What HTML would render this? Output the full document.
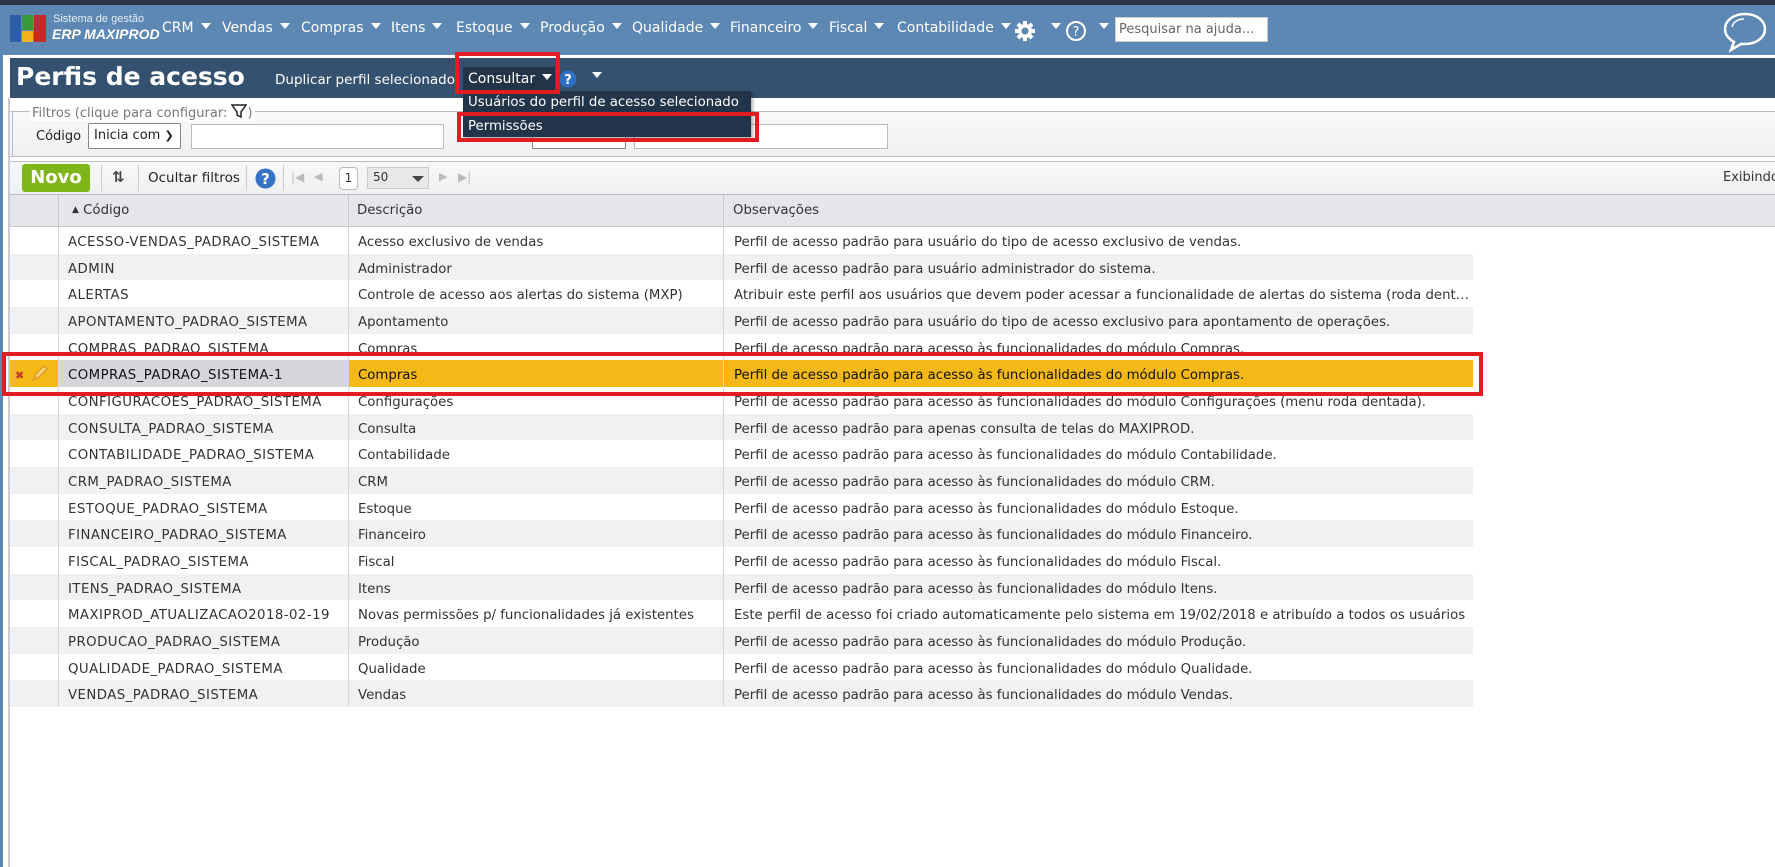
<!DOCTYPE html>
<html><head><meta charset="utf-8">
<style>
*{box-sizing:border-box;margin:0;padding:0}
body{width:1775px;height:867px;overflow:hidden;background:#fff;font-family:"DejaVu Sans","Liberation Sans",sans-serif;font-size:13px;color:#333;position:relative}
.a{position:absolute;white-space:nowrap}
.nav{left:0;top:5px;width:1775px;height:50px;background:#5c88b3}
.nv{color:#fff;font-size:14px;top:20px}
.tri{display:inline-block;width:0;height:0;border-left:5px solid transparent;border-right:5px solid transparent;border-top:6px solid #fff;vertical-align:3px;margin-left:7px}
.row{position:absolute;left:10px;width:1463px;height:26.67px;font-size:13.3px}
.row div{position:absolute;top:0;height:100%;line-height:26.67px;padding-top:3px;overflow:hidden;text-overflow:ellipsis;white-space:nowrap}
.c0{left:0;width:48px}
.c1{left:48px;width:290px;padding-left:9px;border-left:1px solid #d5d7da;letter-spacing:0.45px}
.c2{left:338px;width:375px;padding-left:9px;border-left:1px solid #d5d7da}
.c3{left:713px;width:750px;padding-left:10px;border-left:1px solid #d5d7da}
.g{background:#f0f1f3}
</style></head><body>
<div class="a" style="left:0;top:0;width:1775px;height:5px;background:#2e3647"></div>
<div class="a nav"></div>
<div class="a" style="left:0;top:5px;width:3px;height:862px;background:#5c88b3"></div>
<div class="a" style="left:8px;top:98px;width:2px;height:769px;background:#c9ccd1"></div>
<!-- logo -->
<div class="a" style="left:10px;top:15px;width:11px;height:27px;background:#2d5fa8"></div>
<div class="a" style="left:22px;top:15px;width:11px;height:15px;background:#3a9a3a"></div>
<div class="a" style="left:22px;top:31px;width:11px;height:11px;background:#f2b21c"></div>
<div class="a" style="left:34px;top:15px;width:12px;height:27px;background:#c42a2a"></div>
<div class="a" style="left:53px;top:13px;color:#e6edf5;font-size:11px;font-family:'Liberation Sans',sans-serif">Sistema de gestão</div>
<div class="a" style="left:52px;top:26px;color:#fff;font-size:14px;font-style:italic;font-weight:bold;font-family:'Liberation Sans',sans-serif">ERP MAXIPROD</div>
<div class="a nv" style="left:162px">CRM<span class="tri"></span></div>
<div class="a nv" style="left:222px">Vendas<span class="tri"></span></div>
<div class="a nv" style="left:301px">Compras<span class="tri"></span></div>
<div class="a nv" style="left:391px">Itens<span class="tri"></span></div>
<div class="a nv" style="left:456px">Estoque<span class="tri"></span></div>
<div class="a nv" style="left:540px">Produção<span class="tri"></span></div>
<div class="a nv" style="left:632px">Qualidade<span class="tri"></span></div>
<div class="a nv" style="left:730px">Financeiro<span class="tri"></span></div>
<div class="a nv" style="left:829px">Fiscal<span class="tri"></span></div>
<div class="a nv" style="left:897px">Contabilidade<span class="tri"></span></div>
<svg class="a" style="left:1014px;top:20px" width="22" height="22" viewBox="0 0 22 22"><g fill="#fff"><circle cx="11" cy="11" r="7"/><rect x="9" y="1" width="4" height="20"/><rect x="1" y="9" width="20" height="4"/><rect x="9" y="1" width="4" height="20" transform="rotate(45 11 11)"/><rect x="9" y="1" width="4" height="20" transform="rotate(-45 11 11)"/></g><circle cx="11" cy="11" r="3.5" fill="#5c88b3"/></svg>
<div class="a nv" style="left:1044px"><span class="tri"></span></div>
<svg class="a" style="left:1065px;top:20px" width="22" height="22"><circle cx="11" cy="11" r="9" fill="none" stroke="#fff" stroke-width="2"/><text x="11" y="16" text-anchor="middle" fill="#fff" font-size="13" font-family="DejaVu Sans">?</text></svg>
<div class="a nv" style="left:1092px"><span class="tri"></span></div>
<div class="a" style="left:1115px;top:17px;width:153px;height:25px;background:#fff;border:1px solid #ccc;color:#666;font-size:13px;line-height:23px;padding-left:3px">Pesquisar na ajuda...</div>
<svg class="a" style="left:1722px;top:11px" width="46" height="42" viewBox="0 0 46 42"><path d="M23 3C11 3 3 10 3 18c0 6 4 10 9 13l-3 8 10-6c1 0 3 0 4 0 12 0 20-7 20-15S35 3 23 3z" fill="none" stroke="#fff" stroke-width="2.5"/><path d="M10 16c1-5 6-8 12-8" fill="none" stroke="#fff" stroke-width="1.5"/></svg>

<!-- title bar -->
<div class="a" style="left:10px;top:58px;width:1765px;height:40px;background:#34516f"></div>
<div class="a" style="left:16px;top:62px;color:#fff;font-size:25px;font-weight:bold;font-family:'DejaVu Sans',sans-serif">Perfis de acesso</div>
<div class="a" style="left:275px;top:72px;color:#fff;font-size:13.5px">Duplicar perfil selecionado</div>
<div class="a" style="left:463px;top:67px;width:92px;height:23px;background:#233448"></div>
<div class="a" style="left:468px;top:71px;color:#fff;font-size:14px">Consultar<span class="tri"></span></div>
<svg class="a" style="left:559px;top:70px" width="18" height="18"><circle cx="9" cy="9" r="8.5" fill="#2f6fc2"/><text x="9" y="14" text-anchor="middle" fill="#fff" font-size="13" font-weight="bold" font-family="DejaVu Sans">?</text></svg>
<div class="a nv" style="left:585px;top:69px"><span class="tri"></span></div>

<!-- filters -->
<div class="a" style="left:10px;top:111px;width:1765px;height:46px;background:linear-gradient(#f8f9fa,#eef0f2);border-top:1px solid #b8bbbf;border-bottom:1px solid #b8bbbf"></div>
<div class="a" style="left:12px;top:112px;width:1px;height:44px;background:#b8bbbf"></div>
<div class="a" style="left:30px;top:104px;background:#fff;padding:0 2px;color:#777;font-size:13px">Filtros (clique para configurar: <svg width="16" height="14" style="vertical-align:-1px"><path d="M1 1h14l-5 7v5l-4-2V8z" fill="none" stroke="#222" stroke-width="1.5"/></svg>)</div>
<div class="a" style="left:36px;top:129px;color:#222;font-size:13px">Código</div>
<div class="a" style="left:88px;top:123px;width:93px;height:26px;background:#fff;border:1px solid #888;border-radius:2px;color:#222;font-size:13px;line-height:24px;padding-left:5px">Inicia com <span style="font-size:11px">&#10095;</span></div>
<div class="a" style="left:191px;top:124px;width:253px;height:25px;background:#fff;border:1px solid #bbb"></div>
<div class="a" style="left:532px;top:124px;width:94px;height:25px;background:#fff;border:1px solid #888"></div>
<div class="a" style="left:634px;top:124px;width:254px;height:25px;background:#fff;border:1px solid #bbb"></div>

<!-- dropdown -->
<div class="a" style="left:463px;top:91px;width:288px;height:46px;background:#223449;box-shadow:2px 2px 3px rgba(0,0,0,.3)"></div>
<div class="a" style="left:468px;top:95px;color:#fff;font-size:13.3px">Usuários do perfil de acesso selecionado</div>
<div class="a" style="left:468px;top:119px;color:#fff;font-size:13.3px">Permissões</div>
<div class="a" style="left:457px;top:112px;width:302px;height:30px;border:4px solid #e21d22"></div>
<div class="a" style="left:455px;top:52px;width:105px;height:42px;border:4px solid #e21d22"></div>

<!-- toolbar -->
<div class="a" style="left:10px;top:161px;width:1765px;height:34px;background:linear-gradient(#f7f8f9,#eef0f2);border-top:1px solid #b8bbbf;border-bottom:1px solid #b8bbbf"></div>
<div class="a" style="left:22px;top:164px;width:68px;height:28px;background:#80b51a;border-radius:3px;color:#fff;font-weight:bold;font-size:18px;line-height:28px;text-align:center">Novo</div>
<div class="a" style="left:101px;top:165px;width:1px;height:26px;background:#ccc"></div>
<div class="a" style="left:112px;top:168px;font-size:15px;font-weight:bold;color:#444">&#8645;</div>
<div class="a" style="left:138px;top:165px;width:1px;height:26px;background:#ccc"></div>
<div class="a" style="left:148px;top:170px;color:#222;font-size:13.5px">Ocultar filtros</div>
<div class="a" style="left:246px;top:165px;width:1px;height:26px;background:#ccc"></div>
<svg class="a" style="left:255px;top:168px" width="21" height="21"><circle cx="10.5" cy="10.5" r="10" fill="#3572c6"/><text x="10.5" y="16" text-anchor="middle" fill="#fff" font-size="15" font-weight="bold" font-family="DejaVu Sans">?</text></svg>
<div class="a" style="left:283px;top:165px;width:1px;height:26px;background:#ccc"></div>
<div class="a" style="left:291px;top:170px;color:#bbb;font-size:12px">|&#9664;</div>
<div class="a" style="left:314px;top:170px;color:#bbb;font-size:11px">&#9664;</div>
<div class="a" style="left:339px;top:167px;width:19px;height:23px;background:#fff;border:1px solid #bbb;border-radius:4px;text-align:center;line-height:21px;font-size:12px">1</div>
<div class="a" style="left:367px;top:167px;width:62px;height:22px;background:#e6e8ea;border:1px solid #ccc;font-size:12px;line-height:18px;padding-left:5px">50<span style="position:absolute;left:44px;top:8px;border-left:6px solid transparent;border-right:6px solid transparent;border-top:6px solid #444"></span></div>
<div class="a" style="left:439px;top:170px;color:#bbb;font-size:11px">&#9654;</div>
<div class="a" style="left:458px;top:170px;color:#bbb;font-size:12px">&#9654;|</div>
<div class="a" style="left:1723px;top:170px;color:#333;font-size:13px">Exibindo</div>

<!-- header -->
<div class="a" style="left:10px;top:195px;width:1765px;height:32px;background:#e4e6e9;border-bottom:1px solid #c8cace"></div>
<div class="a" style="left:58px;top:195px;width:1px;height:32px;background:#c8cace"></div>
<div class="a" style="left:348px;top:195px;width:1px;height:32px;background:#c8cace"></div>
<div class="a" style="left:723px;top:195px;width:1px;height:32px;background:#c8cace"></div>
<div class="a" style="left:72px;top:203px;color:#333;font-size:13.3px"><span style="font-size:9px;vertical-align:2px">&#9650;</span> Código</div>
<div class="a" style="left:357px;top:203px;color:#333;font-size:13.3px">Descrição</div>
<div class="a" style="left:733px;top:203px;color:#333;font-size:13.3px">Observações</div>

<div class="row" style="top:227px"><div class="c0"></div><div class="c1">ACESSO-VENDAS_PADRAO_SISTEMA</div><div class="c2">Acesso exclusivo de vendas</div><div class="c3">Perfil de acesso padrão para usuário do tipo de acesso exclusivo de vendas.</div></div>
<div class="row g" style="top:253.67px"><div class="c0"></div><div class="c1">ADMIN</div><div class="c2">Administrador</div><div class="c3">Perfil de acesso padrão para usuário administrador do sistema.</div></div>
<div class="row" style="top:280.33px"><div class="c0"></div><div class="c1">ALERTAS</div><div class="c2">Controle de acesso aos alertas do sistema (MXP)</div><div class="c3">Atribuir este perfil aos usuários que devem poder acessar a funcionalidade de alertas do sistema (roda dentada)</div></div>
<div class="row g" style="top:307px"><div class="c0"></div><div class="c1">APONTAMENTO_PADRAO_SISTEMA</div><div class="c2">Apontamento</div><div class="c3">Perfil de acesso padrão para usuário do tipo de acesso exclusivo para apontamento de operações.</div></div>
<div class="row" style="top:333.67px"><div class="c0"></div><div class="c1">COMPRAS_PADRAO_SISTEMA</div><div class="c2">Compras</div><div class="c3">Perfil de acesso padrão para acesso às funcionalidades do módulo Compras.</div></div>
<div class="row" style="top:360.33px;background:#f4b817;color:#111"><div class="c0"><span style="position:absolute;left:5px;top:3px;color:#c0392b;font-size:11px;font-weight:bold">&#10006;</span><svg style="position:absolute;left:20px;top:5px" width="18" height="18"><path d="M3 15l2-5 9-9 3 3-9 9z" fill="#f7d27a" stroke="#d98e1e" stroke-width="1"/><path d="M3 15l2-5 3 3z" fill="#e8a23a"/></svg></div><div class="c1" style="background:#d4d6da">COMPRAS_PADRAO_SISTEMA-1</div><div class="c2">Compras</div><div class="c3">Perfil de acesso padrão para acesso às funcionalidades do módulo Compras.</div></div>
<div class="row" style="top:387px"><div class="c0"></div><div class="c1">CONFIGURACOES_PADRAO_SISTEMA</div><div class="c2">Configurações</div><div class="c3">Perfil de acesso padrão para acesso às funcionalidades do módulo Configurações (menu roda dentada).</div></div>
<div class="row g" style="top:413.67px"><div class="c0"></div><div class="c1">CONSULTA_PADRAO_SISTEMA</div><div class="c2">Consulta</div><div class="c3">Perfil de acesso padrão para apenas consulta de telas do MAXIPROD.</div></div>
<div class="row" style="top:440.33px"><div class="c0"></div><div class="c1">CONTABILIDADE_PADRAO_SISTEMA</div><div class="c2">Contabilidade</div><div class="c3">Perfil de acesso padrão para acesso às funcionalidades do módulo Contabilidade.</div></div>
<div class="row g" style="top:467px"><div class="c0"></div><div class="c1">CRM_PADRAO_SISTEMA</div><div class="c2">CRM</div><div class="c3">Perfil de acesso padrão para acesso às funcionalidades do módulo CRM.</div></div>
<div class="row" style="top:493.67px"><div class="c0"></div><div class="c1">ESTOQUE_PADRAO_SISTEMA</div><div class="c2">Estoque</div><div class="c3">Perfil de acesso padrão para acesso às funcionalidades do módulo Estoque.</div></div>
<div class="row g" style="top:520.33px"><div class="c0"></div><div class="c1">FINANCEIRO_PADRAO_SISTEMA</div><div class="c2">Financeiro</div><div class="c3">Perfil de acesso padrão para acesso às funcionalidades do módulo Financeiro.</div></div>
<div class="row" style="top:547px"><div class="c0"></div><div class="c1">FISCAL_PADRAO_SISTEMA</div><div class="c2">Fiscal</div><div class="c3">Perfil de acesso padrão para acesso às funcionalidades do módulo Fiscal.</div></div>
<div class="row g" style="top:573.67px"><div class="c0"></div><div class="c1">ITENS_PADRAO_SISTEMA</div><div class="c2">Itens</div><div class="c3">Perfil de acesso padrão para acesso às funcionalidades do módulo Itens.</div></div>
<div class="row" style="top:600.33px"><div class="c0"></div><div class="c1">MAXIPROD_ATUALIZACAO2018-02-19</div><div class="c2">Novas permissões p/ funcionalidades já existentes</div><div class="c3">Este perfil de acesso foi criado automaticamente pelo sistema em 19/02/2018 e atribuído a todos os usuários</div></div>
<div class="row g" style="top:627px"><div class="c0"></div><div class="c1">PRODUCAO_PADRAO_SISTEMA</div><div class="c2">Produção</div><div class="c3">Perfil de acesso padrão para acesso às funcionalidades do módulo Produção.</div></div>
<div class="row" style="top:653.67px"><div class="c0"></div><div class="c1">QUALIDADE_PADRAO_SISTEMA</div><div class="c2">Qualidade</div><div class="c3">Perfil de acesso padrão para acesso às funcionalidades do módulo Qualidade.</div></div>
<div class="row g" style="top:680.33px"><div class="c0"></div><div class="c1">VENDAS_PADRAO_SISTEMA</div><div class="c2">Vendas</div><div class="c3">Perfil de acesso padrão para acesso às funcionalidades do módulo Vendas.</div></div>

<div class="a" style="left:2px;top:352px;width:1481px;height:44px;border:4px solid #e21d22"></div>
</body></html>
